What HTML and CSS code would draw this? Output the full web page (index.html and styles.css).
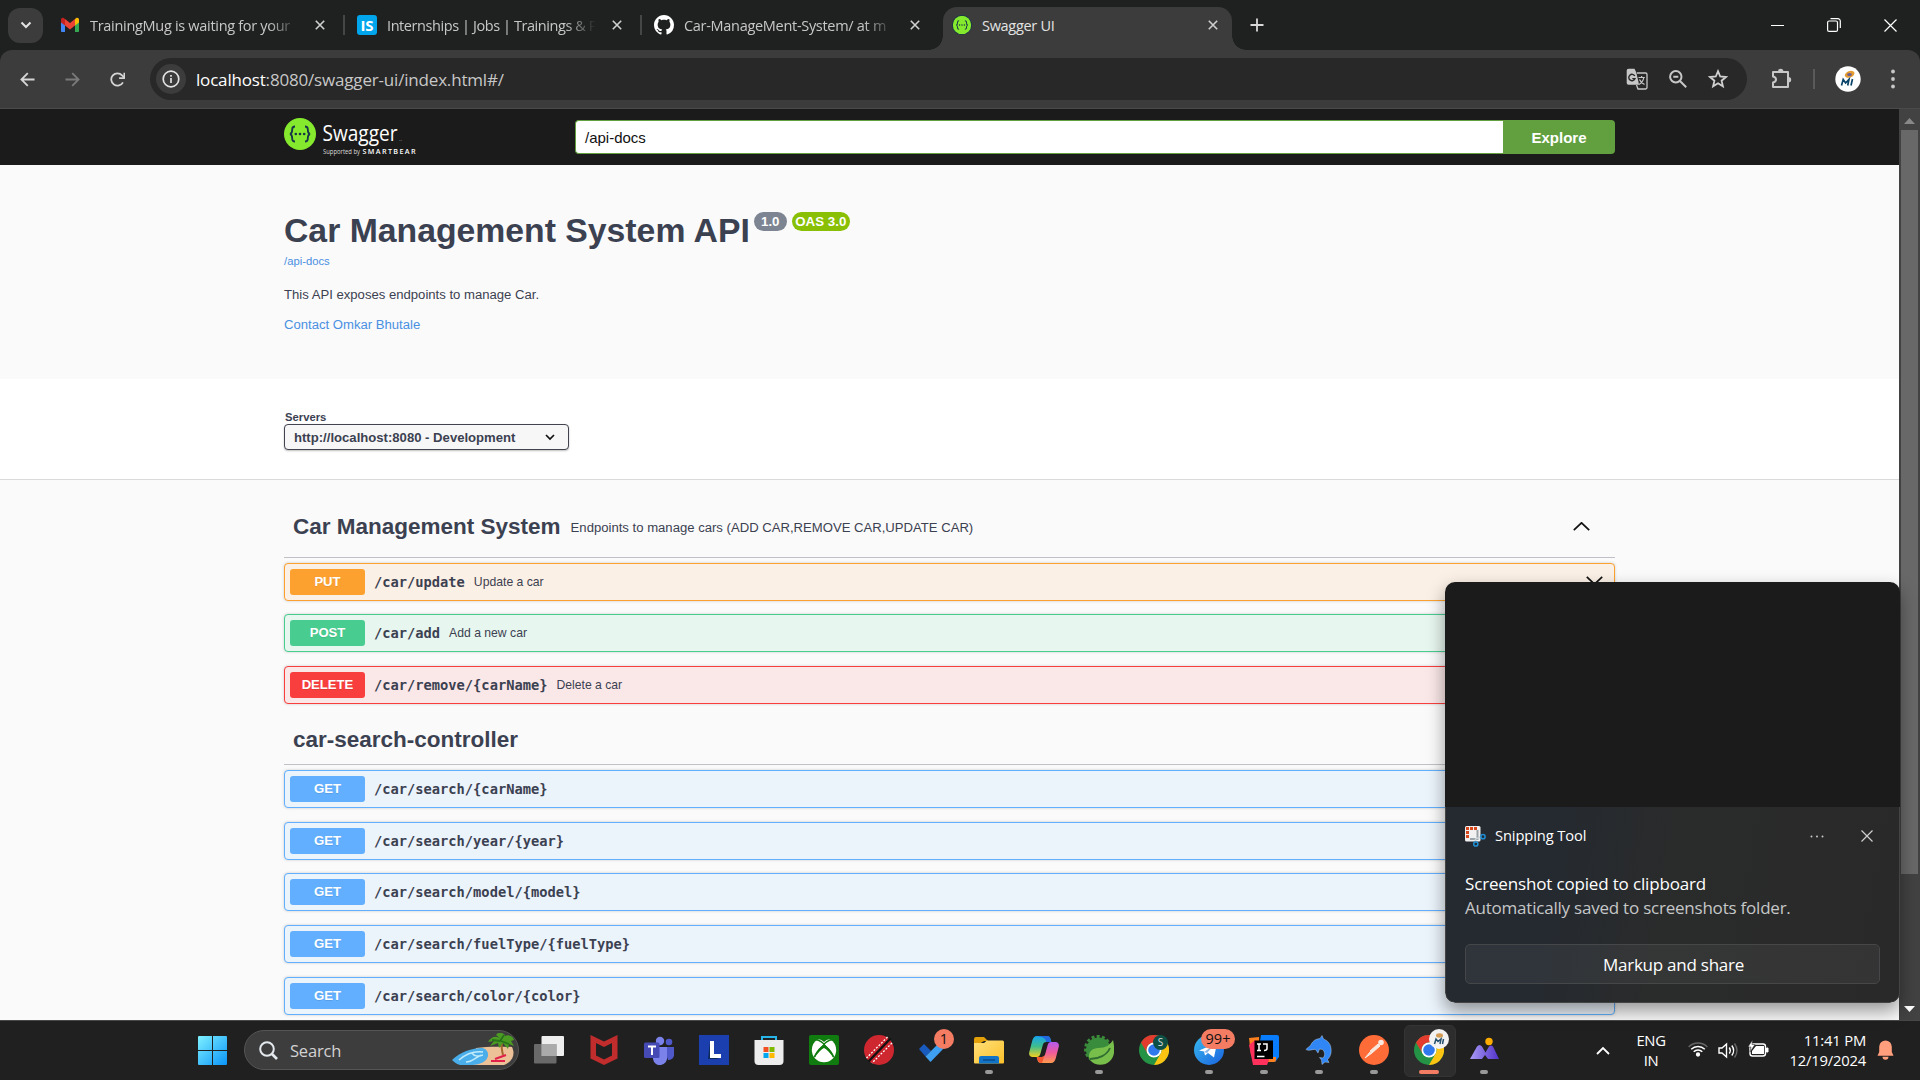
FILE: index.html
```html
<!DOCTYPE html>
<html lang="en">
<head>
<meta charset="utf-8">
<title>Swagger UI</title>
<link rel="stylesheet" href="styles.css">
</head>
<body>
<svg width="0" height="0" class="defs">
  <defs>
    <symbol id="x" viewBox="0 0 10 10"><path d="M.8.8l8.4 8.4M9.2.8L.8 9.2" fill="none" stroke="currentColor" stroke-width="1.6"/></symbol>
    <symbol id="swag" viewBox="0 0 32 32"><circle cx="16" cy="16" r="16" fill="#85ea2d"/><path d="M11 8.5c-2.200 0-2.800.9-2.800 2.800 0 2.300.1 4.200-2.200 4.700 2.300.5 2.200 2.400 2.200 4.700 0 1.900.6 2.800 2.800 2.800M21 8.500c2.200 0 2.800.9 2.800 2.800 0 2.300-.1 4.200 2.200 4.700-2.300.5-2.200 2.400-2.200 4.700 0 1.900-.6 2.800-2.800 2.800" fill="none" stroke="#173647" stroke-width="1.800"/><g fill="#173647"><circle cx="11.800" cy="16" r="1.300"/><circle cx="16" cy="16" r="1.300"/><circle cx="20.200" cy="16" r="1.300"/></g></symbol>
    <symbol id="chrome" viewBox="0 0 30 30"><circle cx="15" cy="15" r="15" fill="#249345"/><path d="M2 7.500A15 15 0 0 1 28 7.500H15a7.500 7.500 0 0 0-6.500 11.200z" fill="#e33b2e"/><path d="M28 7.500A15 15 0 0 1 15 30l6.500-11.200A7.500 7.500 0 0 0 15 7.500z" fill="#fcc412"/><circle cx="15" cy="15" r="7.500" fill="#fff"/><circle cx="15" cy="15" r="5.800" fill="#2f78ee"/></symbol>
    <symbol id="down" viewBox="0 0 17 9"><path d="M.8.8l7.700 7.400L16.200.8" fill="none" stroke="#111" stroke-width="1.700"/></symbol>
    <linearGradient id="win" x1="0" y1="0" x2="1" y2="1"><stop offset="0" stop-color="#7ff1ff"/><stop offset="1" stop-color="#0a94f8"/></linearGradient>
    <linearGradient id="tg" x1="0" y1="0" x2="1" y2="1"><stop offset="0" stop-color="#37bbf0"/><stop offset="1" stop-color="#1b62dd"/></linearGradient>
    <linearGradient id="fold" x1="0" y1="0" x2="1" y2="1"><stop offset="0" stop-color="#ffe07a"/><stop offset="1" stop-color="#fbc02a"/></linearGradient>
    <linearGradient id="cp1" x1="0" y1="0" x2="0" y2="1"><stop offset="0" stop-color="#17a5ee"/><stop offset=".5" stop-color="#3fbe8c"/><stop offset="1" stop-color="#f2d021"/></linearGradient>
    <linearGradient id="cp2" x1="0" y1="0" x2="0" y2="1"><stop offset="0" stop-color="#b45cf0"/><stop offset=".5" stop-color="#ee5a9c"/><stop offset="1" stop-color="#ff9a4d"/></linearGradient>
    <linearGradient id="mt" x1="0" y1="0" x2="1" y2="0"><stop offset="0" stop-color="#a99bf5"/><stop offset="1" stop-color="#5233c9"/></linearGradient>
  </defs>
</svg>

<div class="tabstrip">
  <div class="tabsearch"><svg width="12" height="8" viewBox="0 0 12 8"><path d="M1.500 1.500L6 6l4.500-4.500" fill="none" stroke="#e3e3e3" stroke-width="2"/></svg></div>
  <div class="tab">
    <svg width="20" height="20" viewBox="0 0 20 20"><path d="M1 5.500v10.700c0 .5.300.8.800.8H5V8z" fill="#4285f4"/><path d="M19 5.500v10.700c0 .5-.3.800-.8.800H15V8z" fill="#34a853"/><path d="M15 4l1-.7c1.500-1 3-.2 3 1.500v2.700L15 10.500z" fill="#fbbc04"/><path d="M5 4l-1-.7C2.500 2.300 1 3.100 1 4.800v2.700l4 3z" fill="#c5221f"/><path d="M5 4l5 4 5-4v6.500l-5 3.900-5-3.900z" fill="#ea4335"/></svg>
    <span class="tabtext t1">TrainingMug is waiting for your</span>
    <svg class="close"><use href="#x"/></svg>
  </div>
  <div class="tab">
    <div class="isicon">IS</div>
    <span class="tabtext t2">Internships | Jobs | Trainings &amp; P</span>
    <svg class="close"><use href="#x"/></svg>
  </div>
  <div class="tab nosep">
    <svg width="20" height="20" viewBox="0 0 16 16"><path fill="#fff" d="M8 0C3.580 0 0 3.580 0 8c0 3.540 2.290 6.530 5.470 7.590.4.070.55-.17.55-.38 0-.19-.01-.82-.01-1.490-2.010.37-2.530-.49-2.690-.94-.09-.23-.48-.94-.82-1.130-.28-.15-.68-.52-.01-.53.63-.01 1.080.58 1.230.82.72 1.210 1.870.87 2.330.66.070-.52.28-.87.51-1.070-1.780-.2-3.640-.89-3.640-3.950 0-.87.31-1.590.82-2.150-.08-.2-.36-1.020.08-2.120 0 0 .67-.21 2.200.82.64-.18 1.320-.27 2-.27s1.360.09 2 .27c1.530-1.040 2.200-.82 2.200-.82.44 1.100.16 1.920.08 2.120.51.56.82 1.270.82 2.150 0 3.070-1.870 3.750-3.650 3.950.29.25.54.73.54 1.480 0 1.070-.01 1.930-.01 2.200 0 .21.15.46.55.38A8.010 8.010 0 0 0 16 8c0-4.420-3.580-8-8-8z"/></svg>
    <span class="tabtext t3">Car-ManageMent-System/ at m</span>
    <svg class="close"><use href="#x"/></svg>
  </div>
  <div class="tab active">
    <svg width="20" height="20"><circle cx="10" cy="10" r="10" fill="#173647"/><use href="#swag" x=".8" y=".8" width="18.400" height="18.400"/></svg>
    <span class="tabtext t4">Swagger UI</span>
    <svg class="close"><use href="#x"/></svg>
  </div>
  <svg class="plus" width="14" height="14" viewBox="0 0 14 14"><path d="M7 .5v13M.5 7h13" stroke="#d8d8d8" stroke-width="1.800"/></svg>
  <div class="winctl">
    <svg width="13" height="13" viewBox="0 0 13 13"><path d="M0 6.500h13" stroke="#fff"/></svg>
    <svg width="14" height="14" viewBox="0 0 14 14"><rect x=".6" y="3" width="9.900" height="10.400" rx="1.500" fill="none" stroke="#fff" stroke-width="1.200"/><path d="M3.500.7h7.300a2.500 2.500 0 0 1 2.500 2.500V10" fill="none" stroke="#fff" stroke-width="1.200"/></svg>
    <svg width="13" height="13" viewBox="0 0 13 13"><path d="M.5.500l12 12M12.500.500l-12 12" stroke="#fff" stroke-width="1.200"/></svg>
  </div>
</div>

<div class="toolbarbg"><div class="toolbar">
  <svg class="nav" viewBox="0 0 16 16"><path d="M15.500 8H1.500M8.300 1.200L1.500 8l6.800 6.800" fill="none" stroke="#d5d5d5" stroke-width="1.900"/></svg>
  <svg class="nav" viewBox="0 0 16 16"><path d="M.5 8h14M7.700 1.200L14.500 8l-6.800 6.800" fill="none" stroke="#7a7a7a" stroke-width="1.900"/></svg>
  <svg class="nav" viewBox="0 0 16 16"><path d="M13.800 11A6.600 6.600 0 1 1 12.900 3.600L15 5.800" fill="none" stroke="#d5d5d5" stroke-width="1.900"/><path d="M15.300.8v5.700H9.700" fill="none" stroke="#d5d5d5" stroke-width="1.900"/></svg>
  <div class="omnibox">
    <div class="siteinfo"><svg width="18" height="18" viewBox="0 0 18 18"><circle cx="9" cy="9" r="7.800" fill="none" stroke="#e3e3e3" stroke-width="1.700"/><path d="M9 8v5M9 5v1.700" stroke="#e3e3e3" stroke-width="1.700"/></svg></div>
    <span class="url"><b>localhost</b>:8080/swagger-ui/index.html#/</span>
    <svg class="oi" width="22" height="22" viewBox="0 0 22 22"><path d="M2.500.7h6l1.800 3.800 2.800 12.300H2.500A1.800 1.800 0 0 1 .7 15V2.500A1.800 1.800 0 0 1 2.500.7z" fill="#c7c7c7"/><path d="M11 5h8.600c.8 0 1.400.6 1.400 1.400v13.200c0 .8-.6 1.400-1.400 1.400H12l-1.500-4" fill="none" stroke="#c7c7c7" stroke-width="1.300"/><path d="M8.800 8A3.200 3.200 0 1 0 9 10.600H6.300" fill="none" stroke="#282828" stroke-width="1.400"/><path d="M12.500 9.500h6.300M15.600 8v1.500M17.800 9.500c-.5 3-2.500 5.500-4.800 7M13.500 11.500c1 2.500 3 4 5 5" fill="none" stroke="#c7c7c7" stroke-width="1.200"/></svg>
    <svg class="oi" width="18" height="18" viewBox="0 0 18 18"><circle cx="6.800" cy="6.800" r="5.700" fill="none" stroke="#c7c7c7" stroke-width="2"/><path d="M11 11l6.200 6.200M4.300 6.800h5" stroke="#c7c7c7" stroke-width="2"/></svg>
    <svg class="oi" width="20" height="20" viewBox="0 0 20 20"><path d="M10 2.200l2.200 5.300 5.700.5-4.300 3.700 1.300 5.600-4.900-3-4.900 3 1.300-5.600L2.100 8l5.700-.5z" fill="none" stroke="#d0d0d0" stroke-width="1.800"/></svg>
  </div>
  <svg class="ext" width="21" height="22" viewBox="0 0 21 22"><path d="M2 4h15v15H2v-4.500c4-.8 4-5.200 0-6z" fill="none" stroke="#c7c7c7" stroke-width="2" stroke-linejoin="round"/><path d="M7 3.500a2.700 2.700 0 0 1 5.400 0zM17.500 9a2.700 2.700 0 0 1 0 5.400z" fill="#c7c7c7"/></svg>
  <div class="tsep"></div>
  <svg class="avatar" width="26" height="26" viewBox="0 0 26 26"><circle cx="13" cy="13" r="12.700" fill="#fff"/><ellipse cx="14.500" cy="8.500" rx="5" ry="3.200" fill="#e49b2f" transform="rotate(-20 14 8)"/><ellipse cx="14.500" cy="8.500" rx="2.400" ry="1.600" fill="#6a5d92"/><path d="M6.500 19.500l1.700-6 2.400 3.500 3.400-3.700-1.300 6.200M16 19.500l1.500-6.500" fill="none" stroke="#0b4468" stroke-width="1.700"/></svg>
  <svg width="4" height="20" viewBox="0 0 4 20" fill="#c7c7c7"><circle cx="2" cy="2.500" r="1.900"/><circle cx="2" cy="10" r="1.900"/><circle cx="2" cy="17.500" r="1.900"/></svg>
</div></div>

<div class="viewport">
  <main class="page">
    <header class="topbar"><div class="wrap">
      <svg class="swlogo" width="134" height="40" viewBox="0 0 134 40"><use href="#swag" x="0" y="0" width="32" height="32"/><text x="38.500" y="22.500" textLength="75" lengthAdjust="spacingAndGlyphs" class="lg1">Swagger</text><text x="115" y="22.500" class="lg2">..</text><text x="39" y="36" textLength="37" lengthAdjust="spacingAndGlyphs" class="lg3">Supported by</text><text x="78.500" y="36" textLength="53" class="lg4">SMARTBEAR</text></svg>
      <div class="input">/api-docs</div><div class="explore">Explore</div>
    </div></header>
    <section class="info"><div class="wrap col">
      <div class="titlerow"><h1>Car Management System API</h1><span class="ver">1.0</span><span class="ver oas">OAS 3.0</span></div>
      <a class="doc">/api-docs</a>
      <p>This API exposes endpoints to manage Car.</p>
      <a class="contact">Contact Omkar Bhutale</a>
    </div></section>
    <section class="scheme"><div class="wrap col">
      <span class="srv">Servers</span>
      <div class="select">http://localhost:8080 - Development<svg width="10" height="7" viewBox="0 0 10 7"><path d="M1 1l4 4 4-4" fill="none" stroke="#111" stroke-width="1.700"/></svg></div>
    </div></section>
    <section class="ops"><div class="wrap col">
      <div class="tag"><h3>Car Management System</h3><small>Endpoints to manage cars (ADD CAR,REMOVE CAR,UPDATE CAR)</small><svg class="up" width="17" height="9"><use href="#down"/></svg></div>
      <div class="block first put"><b>PUT</b><code>/car/update</code><span>Update a car</span><svg width="17" height="9"><use href="#down"/></svg></div>
      <div class="block post"><b>POST</b><code>/car/add</code><span>Add a new car</span><svg width="17" height="9"><use href="#down"/></svg></div>
      <div class="block delete"><b>DELETE</b><code>/car/remove/{carName}</code><span>Delete a car</span><svg width="17" height="9"><use href="#down"/></svg></div>
      <div class="tag second"><h3>car-search-controller</h3></div>
      <div class="block first get"><b>GET</b><code>/car/search/{carName}</code></div>
      <div class="block get"><b>GET</b><code>/car/search/year/{year}</code></div>
      <div class="block get"><b>GET</b><code>/car/search/model/{model}</code></div>
      <div class="block get"><b>GET</b><code>/car/search/fuelType/{fuelType}</code></div>
      <div class="block get"><b>GET</b><code>/car/search/color/{color}</code></div>
    </div></section>
  </main>
  <div class="scroll">
    <svg width="11" height="6" viewBox="0 0 11 6"><path d="M0 6l5.500-6L11 6z" fill="#888"/></svg>
    <div class="thumb"></div>
    <svg width="11" height="6" viewBox="0 0 11 6"><path d="M0 0l5.500 6L11 0z" fill="#fff"/></svg>
  </div>
</div>

<aside class="toast">
  <div class="shot"></div>
  <div class="tbody">
    <div class="thead">
      <svg width="21" height="21" viewBox="0 0 21 21"><rect x="0" y="0" width="15.500" height="15.500" rx="1.500" fill="#f1f1f1"/><path d="M1 2.500h11" stroke="#d9481c" stroke-width="3" stroke-dasharray="3 1"/><path d="M2.500 5v7" stroke="#d9481c" stroke-width="3" stroke-dasharray="3 1"/><path d="M12.500 4v9H5" stroke="#9aa3a8" stroke-width="2" fill="none"/><path d="M10.500 15v-2l5-2" stroke="#c9d1d6" stroke-width="1.500" fill="none"/><circle cx="18" cy="10.700" r="2.100" fill="none" stroke="#1e8fd5" stroke-width="1.500"/><circle cx="10.800" cy="18" r="2.100" fill="none" stroke="#1e8fd5" stroke-width="1.500"/></svg>
      <span class="app">Snipping Tool</span>
      <svg width="14" height="3" viewBox="0 0 14 3" fill="#c8c8c8"><circle cx="1.500" cy="1.500" r="1"/><circle cx="7" cy="1.500" r="1"/><circle cx="12.500" cy="1.500" r="1"/></svg>
      <svg width="12" height="12" viewBox="0 0 12 12"><path d="M.5.500l11 11M11.500.500l-11 11" stroke="#d0d0d0" stroke-width="1.200"/></svg>
    </div>
    <div class="l1">Screenshot copied to clipboard</div>
    <div class="l2">Automatically saved to screenshots folder.</div>
    <div class="btn">Markup and share</div>
  </div>
</aside>

<footer class="taskbar">
  <svg class="start" width="29" height="29" viewBox="0 0 29 29"><path d="M0 1a1 1 0 0 1 1-1h13v14H0zM15 0h13a1 1 0 0 1 1 1v13H15zM0 15h14v14H1a1 1 0 0 1-1-1zM15 15h14v13a1 1 0 0 1-1 1H15z" fill="url(#win)"/></svg>
  <div class="search">
    <svg width="19" height="19" viewBox="0 0 19 19"><circle cx="8" cy="8" r="6.800" fill="none" stroke="#e4e9ee" stroke-width="2"/><path d="M13 13l5 5" stroke="#e4e9ee" stroke-width="2.600"/></svg>
    <span>Search</span>
    <svg class="beach" width="63" height="34" viewBox="0 0 63 34"><path d="M24 15c10-1.500 22-1.500 36-1 3 6 2 14-8 18H20z" fill="#ecc198"/><path d="M0 27C8 19 20 15 30 15c6 1 8 7 4 12-4 4-10 5-16 5H8c-4-1-7-4-8-5z" fill="#4aaeea"/><path d="M7 27c8-7 16-9 24-8M14 29c7 0 10-6 17-7M20 20c2 3 6 4 9 2" stroke="#c3ecfb" stroke-width="1.500" fill="none"/><path d="M51 22c-1-4-2-8-1-13" stroke="#a5682c" stroke-width="2" fill="none"/><path d="M49 6c-5-4-10-2-13 3l6-1-4 5 8-3 1 5 4-5 5 6 1-5 5 2-3-5 3-1c-1-4-6-6-9-4 0-3-7-5-9-1z" fill="#4b9b23"/><path d="M40 7l8 1 4-6M49 8l8 3" stroke="#27721b" stroke-width="1.800" fill="none"/><path d="M39 28h14M43 26l11-4" stroke="#e2214b" stroke-width="2.200"/></svg>
  </div>
  <div class="apps">
    <div class="slot"><svg viewBox="0 0 30 30"><rect x="7.500" y="1" width="22.500" height="20" rx="1" fill="#eee"/><rect x="0" y="9" width="22.500" height="19.500" rx="1" fill="#777" opacity=".85"/><rect x="7.500" y="9" width="15" height="12" fill="#aaa"/></svg></div>
    <div class="slot"><svg viewBox="0 0 30 30"><path d="M1.500 0L15 6.500 28.500 0v23.500L15 30 1.500 23.500zM7 8v12.500l8 4 8-4V8l-8 4z" fill="#c12c2d" fill-rule="evenodd"/></svg></div>
    <div class="slot"><svg viewBox="0 0 30 30"><circle cx="25" cy="7" r="3.300" fill="#5059c9"/><path d="M20 12h10v8c0 3-3 5-6 5z" fill="#5059c9"/><circle cx="16" cy="6" r="4.200" fill="#7b83eb"/><path d="M8 12h15v10a7 7 0 0 1-14 2z" fill="#7b83eb"/><rect x="0" y="7.500" width="15.500" height="15.500" rx="1.500" fill="#454ab5"/><path d="M4 11.500h8M8 11.500v8.500" stroke="#fff" stroke-width="2"/></svg></div>
    <div class="slot"><svg viewBox="0 0 30 30"><rect width="30" height="30" fill="#1c3faf"/><path d="M11 6l-2 18h11l-7-3z" fill="#0c2a5c"/><path d="M11 6h4v13h7v4H11z" fill="#fff"/></svg></div>
    <div class="slot"><svg viewBox="0 0 30 30"><path d="M8 7V2h14v5" fill="none" stroke="#26b4e9" stroke-width="2"/><path d="M.5 5h29v21a4 4 0 0 1-4 4h-21a4 4 0 0 1-4-4z" fill="#ededed"/><path d="M8 5V2h14v3" fill="none" stroke="#26b4e9" stroke-width="2"/><path fill="#f25022" d="M9.500 12h5v5h-5z"/><path fill="#7fba00" d="M15.500 12h5v5h-5z"/><path fill="#00a4ef" d="M9.500 18h5v5h-5z"/><path fill="#ffb900" d="M15.500 18h5v5h-5z"/></svg></div>
    <div class="slot"><svg viewBox="0 0 30 30"><rect width="30" height="30" rx="2" fill="#107c10"/><circle cx="15" cy="15" r="12.200" fill="#fff"/><path d="M7.500 4.500c3-.8 5.500.8 7.500 2.500 2-1.700 4.500-3.300 7.500-2.500l-2-3h-11zM15 9.200c5 3.500 9.500 9 9.500 13.500-2-4-6-8-9.500-10.700-3.500 2.700-7.500 6.700-9.500 10.700 0-4.500 4.500-10 9.500-13.500z" fill="#107c10"/><path d="M7 4.800c3.500 0 8 4 8 4.800s-8 6.500-9.500 12.500C7 18 12 13.500 15 12c3 1.500 8 6 9.500 10.100C23 16 15 10.300 15 9.600s4.500-4.800 8-4.800" fill="none" stroke="#107c10" stroke-width="1.600"/></svg></div>
    <div class="slot"><svg viewBox="0 0 30 30"><circle cx="15" cy="15" r="15" fill="#cf2730"/><path d="M26.500 3.500l-22 23" stroke="#111" stroke-width="2.500"/><path d="M23.500 2L2.500 23M28 8L8 28" stroke="#fff" stroke-width="1.300" stroke-dasharray="2 1.500"/></svg></div>
    <div class="slot"><svg viewBox="0 0 30 30"><path d="M0 14l5-5 7 7-5.500 5.500z" fill="#185abd"/><path d="M6.500 21.500L22 6l5 5-15.500 16z" fill="#3f9ff0"/></svg><i class="badge n1">1</i></div>
    <div class="slot run"><svg viewBox="0 0 30 30"><path d="M0 4a2 2 0 0 1 2-2h8l4 4h-4L0 12z" fill="#e3a008"/><path d="M0 8h10l3-2.500h15.500A1.500 1.500 0 0 1 30 7v20.500a1 1 0 0 1-1 1H1a1 1 0 0 1-1-1z" fill="url(#fold)"/><path d="M5 28.500V23a2 2 0 0 1 2-2h16a2 2 0 0 1 2 2v5.500z" fill="#1174c8"/><path d="M9 25h12" stroke="#0b4b8c" stroke-width="1.500"/></svg></div>
    <div class="slot"><svg viewBox="0 0 30 30"><path d="M8 1h10c2 0 3 1 3.500 3l.8 3h-5c-2 0-3 1-3.500 3l-2.500 9c-.6 2-1.500 3-3.500 3H3.500C1 22-.5 20 .3 17l3-11.500C4 3 5.500 1 8 1z" fill="url(#cp1)"/><path d="M22 28H12c-2 0-3-1-3.500-3l-.8-3h5c2 0 3-1 3.500-3l2.500-9c.6-2 1.500-3 3.500-3h4.300c2.500 0 4 2 3.200 5l-3 11.500C26 26 24.500 28 22 28z" fill="url(#cp2)"/><path d="M8 1h10c2 0 3 1 3.500 3l.8 3h-5c-1-4-3-5-9.300-6z" fill="#2268de"/><path d="M7.700 22h5c1.300 0 2.300-.7 3-2L13 28c-3 0-4.500-2-5.300-6z" fill="#f4572f"/></svg></div>
    <div class="slot run"><svg viewBox="0 0 30 30"><circle cx="14" cy="14" r="12.500" fill="none" stroke="#3c8b3a" stroke-width="3" stroke-dasharray="3 2.200"/><circle cx="14.500" cy="15" r="12.500" fill="#398c3b"/><path d="M29 5c2 9 2 16-3 21-6 6-16 4-19 0-5-6 0-13 7-13 8 0 12-3 15-8z" fill="#78be4a"/><path d="M6 24c9 0 17-4 20-11" stroke="#2f6c32" stroke-width="1.800" fill="none"/></svg></div>
    <div class="slot"><svg viewBox="0 0 30 30"><use href="#chrome"/></svg><i class="badge s">S</i></div>
    <div class="slot run"><svg viewBox="0 0 30 30"><circle cx="15" cy="15" r="15" fill="url(#tg)"/><path d="M5 15.500L23 8l-3 14.500-6-4.500-3 2.500-1-4z" fill="#fff"/><path d="M10 17l10-7-7 8z" fill="#8ab8ea"/></svg><i class="badge n99">99+</i></div>
    <div class="slot run"><svg viewBox="0 0 30 30"><path d="M0 3l10-1v10l-8 8z" fill="#fc801d"/><path d="M12 0h16a2 2 0 0 1 2 2v20l-4 5-16-14z" fill="#087cfa"/><path d="M18 22h9v3a2 2 0 0 1-2 2h-7z" fill="#fc801d"/><path d="M0 10l6-5 14 20-2 5H4z" fill="#fe315d"/><rect x="5.500" y="5.500" width="18.500" height="18.500" fill="#000"/><path d="M8 9h4M10 9v6.500M8 15.500h4M14 9h4v4.500q0 2-3 2M8 21.500h7.500" stroke="#fff" stroke-width="1.500" fill="none"/></svg></div>
    <div class="slot run"><svg viewBox="0 0 30 30"><path d="M2 14.500C3.500 12 6 12 7 9.500 9 5.500 12 4 16 3.500L18 .5l1.500 3.500C25 6 28 11 27 18c-.5 3-2 5-3.500 6.500l1.500 3-4-.5-3 2.500-.5-4.500-2-2.500 3.500.5c2.500-2.500 2-6-.5-8.500l-3-.5-1.500 4-2.500-3.500C8 14 5 16.500 2 14.500z" fill="#3086f5" stroke="#cde2fa" stroke-width=".4"/></svg></div>
    <div class="slot run"><svg viewBox="0 0 30 30"><circle cx="15" cy="15" r="15" fill="#ff6c37"/><circle cx="22" cy="7.500" r="2.800" fill="#f9e8df"/><path d="M19 9l-8 7 2 2 8-7zM11 17l-5 6 7-5M14 16l-3 3" fill="#f9e8df" stroke="#f9e8df"/></svg></div>
    <div class="slot run current"><svg viewBox="0 0 30 30"><use href="#chrome"/></svg><svg class="mi" viewBox="0 0 20 20"><circle cx="10" cy="10" r="10" fill="#f2f2f2"/><ellipse cx="10.500" cy="6.500" rx="3.500" ry="2.200" fill="#d49b54"/><path d="M5.500 15l1.500-5 2 2.500 3-2.500-1 5M13.500 15l1-5" fill="none" stroke="#24506d" stroke-width="1.500"/></svg></div>
    <div class="slot run"><svg viewBox="0 0 30 30"><circle cx="20" cy="6.500" r="3.700" fill="#fbab00"/><path d="M1 24L8 11.500q2.500-3 5 0l3.500 6 3.500-6q2-2 4 0l6 12.500H19l-3-4-3 4z" fill="url(#mt)"/></svg></div>
  </div>
  <svg class="chev" width="14" height="9" viewBox="0 0 14 9"><path d="M1 8l6-6 6 6" fill="none" stroke="#fff" stroke-width="1.800"/></svg>
  <div class="lang"><div>ENG</div><div>IN</div></div>
  <svg class="wifi" width="20" height="16" viewBox="0 0 20 16" fill="none" stroke="#fff" stroke-width="1.500"><path d="M.7 6a13 13 0 0 1 18.600 0" stroke="#666"/><path d="M3.200 8.300a9.800 9.800 0 0 1 13.600 0M5.700 10.700a6.200 6.200 0 0 1 8.600 0"/><circle cx="10" cy="13.500" r="1.400" fill="#fff"/></svg>
  <svg class="vol" width="20" height="17" viewBox="0 0 20 17" fill="none" stroke="#fff" stroke-width="1.400"><path d="M1 6h3l4.500-4v13L4 11H1z"/><path d="M11.300 5.500q2 3 0 6M13.800 3.500q3.700 5 0 10"/><path d="M16.500 1.500q5 7 0 14" stroke="#666"/></svg>
  <svg class="bat" width="21" height="17" viewBox="0 0 21 17"><rect x="2" y="4" width="15.500" height="12" rx="2.500" fill="none" stroke="#fff" stroke-width="1.400"/><path d="M8 6h8v8H4v-3z" fill="#fff"/><path d="M18.500 8v4h1.500V8z" fill="#fff" stroke="#fff"/><path d="M4.500 0L0 7h3L2 12l5-7.500H4z" fill="#fff" stroke="#222" stroke-width=".5"/></svg>
  <div class="clock"><div>11:41 PM</div><div>12/19/2024</div></div>
  <svg class="bell" width="17" height="20" viewBox="0 0 17 20"><path d="M8.500.5a6.300 6.300 0 0 1 6.300 6.300V12l1.700 3.700H.5L2.200 12V6.800A6.300 6.300 0 0 1 8.500.5zM5.500 16.800h6a3 3 0 0 1-6 0z" fill="#ff9e7c"/></svg>
</footer>
</body>
</html>
```
FILE: styles.css
```css
* { box-sizing: border-box; }
body { margin: 0; width: 1920px; height: 1080px; overflow: hidden; display: flex; flex-direction: column; position: relative; font-family: "Open Sans", sans-serif; background: #1f2120; }
svg { display: block; flex: none; }
.defs { position: absolute; }

.tabstrip { height: 50px; display: flex; align-items: center; padding-left: 8px; background: #1f2120; flex: none; }
.tabsearch { width: 35px; height: 35px; border-radius: 12px; background: #3c3c3c; display: flex; align-items: center; justify-content: center; margin-right: 17px; }
.tab { display: flex; align-items: center; width: 297px; height: 20px; padding-right: 18px; border-right: 2px solid #444746; }
.tab:nth-child(2) { width: 285px; }
.tab + .tab { padding-left: 12px; }
.tab.nosep { border-right: 0; width: 296px; }
.tab.active { width: 289px; height: 43px; align-self: flex-end; padding: 0 14px 7px 9px; background: #3c3c3c; border: 0; border-radius: 14px 14px 0 0; margin-left: 5px; position: relative; }
.tab.active::before, .tab.active::after { content: ""; position: absolute; bottom: 0; width: 14px; height: 14px; }
.tab.active::before { left: -14px; background: radial-gradient(circle at 0 0, #1f2120 13.5px, #3c3c3c 14px); }
.tab.active::after { right: -14px; background: radial-gradient(circle at 100% 0, #1f2120 13.5px, #3c3c3c 14px); }
.tabtext { flex: 1; margin: 2px 12px 0 10px; overflow: hidden; white-space: nowrap; font-size: 14.500px; line-height: 20px; color: #c7c7c7; letter-spacing: -0.3px; mask-image: linear-gradient(90deg, #000 84%, transparent 98%); }
.t2 { letter-spacing: -0.42px; }
.active .tabtext { color: #e3e3e3; mask-image: none; }
.close { width: 10px; height: 10px; color: #d0d0d0; }
.isicon { width: 20px; height: 20px; border-radius: 3px; background: #00a5ec; color: #fff; font: 700 15px/20px "Open Sans", sans-serif; text-align: center; flex: none; }
.plus { margin-left: 18px; }
.winctl { margin-left: auto; display: flex; gap: 43px; padding-right: 23px; align-items: center; }

.toolbarbg { flex: none; background: #1f2120; }
.toolbar { height: 59px; display: flex; align-items: center; background: #3c3c3c; border-bottom: 1px solid #4a4a4a; border-radius: 12px 12px 0 0; padding-left: 20px; }
.nav { width: 15px; height: 15px; margin-right: 30px; }
.nav:nth-child(3) { margin-right: 25px; }
.omnibox { width: 1597px; height: 42px; border-radius: 21px; background: #282828; display: flex; align-items: center; padding: 0 19px 0 6px; }
.siteinfo { width: 30px; height: 30px; border-radius: 50%; background: #3c3c3c; display: flex; align-items: center; justify-content: center; margin-right: 10px; }
.url { color: #c7c7c7; font-size: 17px; letter-spacing: -0.18px; flex: 1; }
.url b { font-weight: 400; color: #fff; }
.oi { margin-left: 21px; }
.ext { margin-left: 24px; }
.tsep { width: 2px; height: 20px; background: #5a5a5a; margin: 0 20px 0 21px; }
.avatar { margin-right: 30px; }

.viewport { height: 911px; flex: none; display: flex; overflow: hidden; }
.page { width: 1899px; background: #fafafa; color: #3b4151; font-family: "Liberation Sans", Arial, sans-serif; display: flex; flex-direction: column; }
.wrap { width: 1331px; margin-left: 284px; display: flex; align-items: center; }
.wrap.col { flex-direction: column; align-items: flex-start; }
.topbar { height: 56px; background: #1b1b1b; flex: none; }
.topbar .wrap { height: 56px; }
.swlogo { margin-right: 157px; margin-bottom: -2px; overflow: visible; }
.lg1 { font: 22px "Open Sans", sans-serif; fill: #fff; }
.lg2 { font: 6px "Open Sans", sans-serif; fill: #aaa; }
.lg3 { font: 7px "Open Sans", sans-serif; fill: #ddd; }
.lg4 { font: 600 7.200px "Open Sans", sans-serif; fill: #fff; }
.input { width: 928px; height: 34px; border: 1px solid #62a03f; border-right: 0; border-radius: 4px 0 0 4px; background: #fff; color: #111; font-size: 15px; line-height: 34px; padding-left: 9px; }
.explore { width: 112px; height: 34px; border-radius: 0 4px 4px 0; background: #62a03f; color: #fff; font-weight: 700; font-size: 15px; line-height: 35px; text-align: center; }

.info { height: 214px; flex: none; padding-top: 46px; }
.titlerow { display: flex; align-items: flex-start; height: 42px; }
h1 { margin: 0; font-size: 33.750px; line-height: 39px; white-space: nowrap; }
.ver { height: 19px; margin: 1px 5px 0 4px; width: 33px; border-radius: 10px; background: #7d8492; color: #fff; font-weight: 700; font-size: 13.300px; line-height: 19px; text-align: center; }
.ver.oas { margin: 1px 0 0; width: 58px; background: #89bf04; white-space: nowrap; }
.doc { color: #4990e2; font-size: 11.250px; line-height: 15px; margin-top: 1px; }
.info p { margin: 18px 0 0; font-size: 13.125px; line-height: 16px; }
.contact { color: #4990e2; font-size: 13.125px; line-height: 16px; margin-top: 14px; }
.scheme { height: 101px; flex: none; background: #fff; border-bottom: 1px solid #dadada; padding-top: 31px; }
.srv { font-weight: 700; font-size: 11.250px; line-height: 14px; padding-left: 1px; }
.select { width: 285px; height: 26px; border: 1.800px solid #41444e; border-radius: 4px; background: #f7f7f7; box-shadow: 0 1px 2px rgba(0,0,0,.25); font-weight: 700; font-size: 13.125px; display: flex; align-items: center; justify-content: space-between; padding: 0 13px 0 9px; }

.ops { padding-top: 28px; }
.tag { width: 1331px; height: 50px; border-bottom: 1px solid #bfc1c6; display: flex; padding: 0 25px 0 9px; align-items: flex-start; }
.tag h3 { margin: 0; font-size: 22.500px; line-height: 37px; white-space: nowrap; }
.tag small { font-size: 13.125px; line-height: 40px; margin-left: 10px; flex: 1; }
.up { transform: scaleY(-1); margin-top: 14px; }
.tag.second { height: 48px; margin-top: 13.300px; padding-top: 4px; }
.block { width: 1331px; height: 38px; border: 1px solid; border-radius: 4px; margin-top: 13.650px; display: flex; align-items: center; padding: 0 11px 0 5px; box-shadow: 0 0 3px rgba(0,0,0,.19); }
.block.first { margin-top: 4.700px; }
.block b { width: 75px; height: 26px; border-radius: 3px; color: #fff; font-size: 13.125px; line-height: 25px; text-align: center; text-shadow: 0 1px 0 rgba(0,0,0,.1); }
.block code { font: 700 13.720px/20px "DejaVu Sans Mono", monospace; margin-left: 9px; }
.block span { font-size: 12.200px; margin-left: 9px; }
.block svg { margin: -3px 0 0 auto; }
.put { border-color: #fca130; background: #fbf0e5; } .put b { background: #fca130; }
.post { border-color: #49cc90; background: #e7f6ef; } .post b { background: #49cc90; }
.delete { border-color: #f93e3e; background: #fae7e7; } .delete b { background: #f93e3e; }
.get { border-color: #61affe; background: #ebf3fb; } .get b { background: #61affe; }

.scroll { width: 21px; background: #424242; display: flex; flex-direction: column; align-items: center; padding: 9px 0 8px; }
.thumb { width: 17px; height: 744px; background: #686868; margin: 6px 0 auto; }

.toast { position: absolute; left: 1445px; top: 582px; width: 455px; height: 421px; border-radius: 10px; overflow: hidden; box-shadow: 0 8px 18px rgba(0,0,0,.4); color: #fff; white-space: nowrap; }
.shot { height: 225px; background: #1b1b1b; }
.tbody { height: 196px; border: 1px solid #444; border-top: 0; border-radius: 0 0 10px 10px; background: linear-gradient(100deg, #252a30 25%, #2a2b2b 48%, #292929); padding: 16px 19px 0; }
.thead { height: 26px; display: flex; align-items: center; padding: 0 7px 0 0; }
.app { flex: 1; margin: -2px 0 0 9px; font-size: 14.700px; letter-spacing: -0.1px; }
.thead svg + svg { margin-left: 37px; }
.l1 { font-size: 17px; line-height: 25px; margin-top: 22px; letter-spacing: -0.16px; }
.l2 { font-size: 17px; line-height: 25px; margin-top: -1px; color: #c5c7c8; letter-spacing: -0.22px; }
.btn { height: 40px; margin-top: 24px; border: 1px solid #454749; border-radius: 5px; background: rgba(255,255,255,.055); text-align: center; font-size: 17px; line-height: 40px; padding-left: 2px; letter-spacing: -0.25px; }

.taskbar { height: 60px; flex: none; background: #202020; border-top: 1px solid #484848; display: flex; align-items: center; color: #fff; padding: 0 0 1px 198px; }
.search { width: 275px; height: 40px; border-radius: 20px; border: 1px solid #555; background: #3d3d3d; margin: 0 2px 0 17px; display: flex; align-items: center; padding: 0 3px 0 14px; font-size: 16.500px; color: #d2d2d2; }
.search span { margin-left: 12px; flex: 1; letter-spacing: -0.2px; }
.apps { display: flex; }
.slot { width: 55px; height: 58px; display: flex; align-items: center; justify-content: center; position: relative; }
.slot > svg { width: 30px; height: 30px; }
.run::after { content: ""; position: absolute; bottom: 5px; left: 23.500px; width: 8px; height: 4px; border-radius: 2px; background: #999; }
.current::before { content: ""; position: absolute; left: 2.500px; top: 4px; width: 50px; height: 50px; border-radius: 6px; background: #2d2d2d; border: 1px solid #343434; }
.current > svg { position: relative; }
.current::after { left: 17.500px; width: 20px; background: #f47c63; }
.slot > svg.mi { position: absolute; width: 20px; height: 20px; left: 28px; top: 8px; }
.badge { position: absolute; top: 8px; height: 20px; border-radius: 10px; background: #f47c63; color: #111; font: normal 14.500px/20px "Open Sans", sans-serif; text-align: center; }
.n1 { left: 28px; width: 20px; }
.n99 { left: 20px; width: 34px; }
.s { left: 27px; top: 14px; width: 15px; height: 15px; background: #0d4f45; color: #ddd; font-size: 10px; line-height: 15px; }
.chev { margin-left: 85px; }
.lang { width: 60px; margin-left: 11px; text-align: center; font-size: 14.800px; line-height: 20px; letter-spacing: -0.3px; }
.wifi { margin-left: 7px; margin-top: -3px; }
.vol { margin-left: 10px; }
.bat { margin-left: 10px; margin-top: -3px; }
.clock { width: 92px; margin-left: 5px; text-align: right; font-size: 14.800px; line-height: 20px; letter-spacing: -0.2px; }
.bell { margin-left: 11px; }
```
